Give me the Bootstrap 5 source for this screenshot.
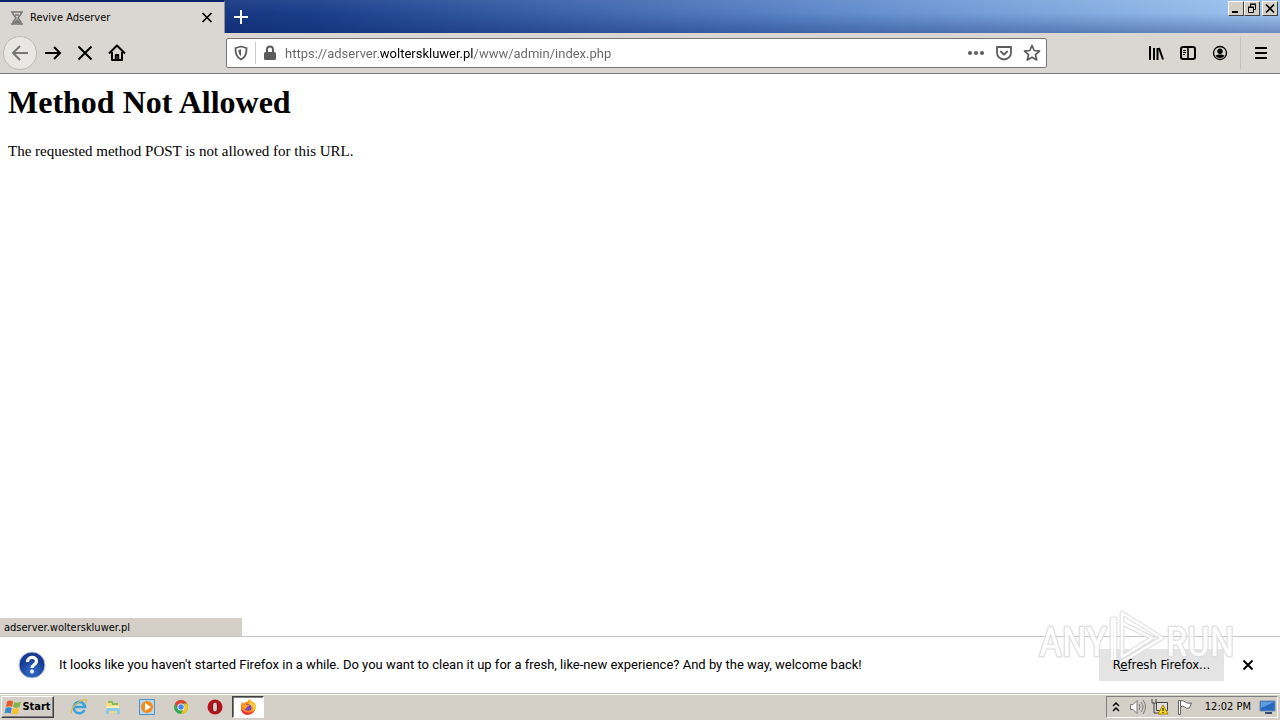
<!DOCTYPE html>
<html lang="en">
<head>
<meta charset="utf-8">
<meta name="viewport" content="width=device-width, initial-scale=1">
<title>Revive Adserver</title>
<link href="https://cdn.jsdelivr.net/npm/bootstrap@5.3.0/dist/css/bootstrap.min.css" rel="stylesheet">
<style>
body{font:11px/14px "DejaVu Sans Condensed","Noto Sans",sans-serif;color:#000;background:#fff}
button{border:0;padding:0;background:none;color:inherit;display:flex;align-items:center;justify-content:center;flex:none}
svg{display:block;flex:none}
.titlebar{height:33px;background:linear-gradient(rgba(255,255,255,.06),rgba(10,30,90,0) 40%,rgba(10,30,100,.34)),linear-gradient(90deg,#0a246a,#1c3f8c 25%,#5f8acb 65%,#a0c5f0)}
.tab{width:225px;background:#dad7d2;border-top:2px solid #0a246a;border-right:1px solid #8f8f8f;padding:0 8px 0 9px}
.tab-label{margin-left:5px}
.newtab{width:32px;color:#fff}
.windows{padding:1px 2px 0 0}
.win{width:16px;height:15px;background:#d4d0c8;border:1px solid;border-color:#fff #404040 #404040 #fff}
.win.last{margin-left:2px}
.toolbar{height:41px;background:#dad7d2;border-bottom:1px solid #777;padding-left:3px}
.navs{width:223px}
.navs button,.tools button{width:32px;height:32px}
.navs .back{width:34px;height:34px;border:1px solid #bcb9b4;border-radius:50%;background:#e9e7e4;color:#777}
.urlbar{height:30px;background:#fff;border:1px solid #777;border-radius:2px;color:#5c5c5c;padding:0 0 0 4px}
.urlbar button{width:28px;height:28px}
.urlbar .shield{width:20px}
.sep{width:1px;height:22px;background:#ccc;margin-left:4px}
.urlbar input{border:0;outline:0;min-width:0;padding:1px 0 0;margin-left:1px;font:13px/18px Roboto,sans-serif;-webkit-text-fill-color:transparent;background:linear-gradient(90deg,#666 0 95px,#000 95px 189px,#666 189px);-webkit-background-clip:text;background-clip:text}
.tools{width:233px}
.tools .menu{width:40px;border-left:1px solid #c4c1bc}
.doc{font-family:"Liberation Serif",serif;padding:10px 8px 0}
.doc h1{font-size:32px;line-height:36px;font-weight:700;margin:0 0 22px}
.doc p{font-size:15px;line-height:18px;margin:0}
.status{width:242px;height:18px;background:#d4d0c8;padding:3px 4px 1px;line-height:14px}
.notice{height:57px;border-top:1px solid #c5c5c5;padding:0 16px 0 18px;font-size:13px;line-height:18px}
.notice-text{margin-left:13px;font-family:Roboto,sans-serif}
.refresh{width:125px;height:32px;background:#e4e4e4}
.closebar{width:32px;height:32px;margin-left:8px}
.taskbar{height:27px;background:#d4d0c8;border-top:1px solid #bbb;box-shadow:inset 0 1px #fff;padding:1px 2px 1px 1px}
.start{width:53px;height:22px;border:1px solid;border-color:#fff #404040 #404040 #fff;box-shadow:inset -1px -1px #808080;font-weight:700;font-size:11px}
.quick{width:34px;height:22px}
.quick.active{width:32px;border:1px solid;border-color:#404040 #fff #fff #404040;background:#fff;box-shadow:inset 1px 1px #808080}
.tray{height:22px;border:1px solid;border-color:#808080 #fff #fff #808080}
.clock{margin-left:12px}
.refresh span{z-index:1}
.watermark{right:46px;bottom:49px;width:196px;height:62px;pointer-events:none}
.watermark text{font:40px "Roboto Condensed",sans-serif;fill:#fff;stroke:#dedede;stroke-width:3px;paint-order:stroke;stroke-linejoin:round}
</style>
</head>
<body class="d-flex flex-column min-vh-100 position-relative">
<header>
<div class="titlebar d-flex">
  <div class="tab d-flex align-items-center">
    <svg width="16" height="16" viewBox="0 0 16 16" fill="none" stroke="#777" stroke-width="1.5"><path d="M2 2h12M2 14h12M4 2v2l3 4-3 4v2M12 2v2L9 8l3 4v2"/><path d="M5.500 12.500 8 10l2.500 2.500zM6 5h4" fill="#999"/></svg>
    <span class="tab-label flex-grow-1">Revive Adserver</span>
    <button aria-label="Close tab"><svg width="18" height="18" viewBox="0 0 18 18" stroke="#000" stroke-width="1.700"><path d="m4.500 4 9 9m0-9-9 9"/></svg></button>
  </div>
  <button class="newtab" aria-label="New tab"><svg width="16" height="16" viewBox="0 0 16 16" stroke="#fff" stroke-width="2"><path d="M8 1v14M1 8h14"/></svg></button>
  <div class="d-flex ms-auto align-items-start windows">
    <button class="win" aria-label="Minimize"><svg width="14" height="13" viewBox="0 0 14 13"><path d="M3 9h6v2H3z"/></svg></button>
    <button class="win" aria-label="Restore"><svg width="14" height="13" viewBox="0 0 14 13" fill="none" stroke="#000"><path d="M5.500 5V2.500h5v5H9M5 2h6M3.500 5.500h5v5h-5zM3 5h6"/></svg></button>
    <button class="win last" aria-label="Close"><svg width="14" height="13" viewBox="0 0 14 13" stroke="#000" stroke-width="1.600"><path d="m3 2.500 8 8m0-8-8 8"/></svg></button>
  </div>
</div>
<nav class="toolbar d-flex align-items-center" aria-label="Browser toolbar">
  <div class="navs d-flex align-items-center">
    <button class="back" aria-label="Back"><svg width="18" height="18" viewBox="0 0 18 18" fill="none" stroke="currentColor" stroke-width="2"><path d="M17 9H2m7-7L2 9l7 7"/></svg></button>
    <button aria-label="Forward"><svg width="18" height="18" viewBox="0 0 18 18" fill="none" stroke="#000" stroke-width="2"><path d="M1 9h15M10 3l6 6-6 6"/></svg></button>
    <button aria-label="Stop"><svg width="16" height="16" viewBox="0 0 16 16" stroke="#000" stroke-width="2"><path d="m1.500 1.500 13 13m0-13-13 13"/></svg></button>
    <button aria-label="Home"><svg width="18" height="18" viewBox="0 0 18 18" fill="none" stroke="#000" stroke-width="2" stroke-linejoin="round"><path d="m1 9.500 8-8 8 8M4 8v8h10V8M7.800 16v-5h2.400v5"/></svg></button>
  </div>
  <div class="urlbar d-flex align-items-center flex-grow-1">
    <button class="shield" aria-label="Tracking protection"><svg width="16" height="16" viewBox="0 0 16 16" fill="none" stroke="currentColor" stroke-width="1.800"><path d="M8 1.500 13.500 3c0 5-.5 9-5.500 11.500C3 12 2.500 8 2.500 3z" stroke-linejoin="round"/><path d="M8 4.300v7C6 9.500 5.500 8 5.400 5z" fill="currentColor" stroke="none"/></svg></button>
    <span class="sep"></span>
    <button aria-label="Site information"><svg width="14" height="16" viewBox="0 0 14 16"><path d="M4 7V4.500a3 3 0 0 1 6 0V7" fill="none" stroke="currentColor" stroke-width="2"/><rect x="1" y="7" width="12" height="8" rx="1.500" fill="currentColor"/></svg></button>
    <input class="flex-grow-1" type="text" aria-label="Address" value="https://adserver.wolterskluwer.pl/www/admin/index.php" spellcheck="false">
    <button aria-label="Page actions"><svg width="18" height="6" viewBox="0 0 18 6" fill="currentColor"><circle cx="3" cy="3" r="2"/><circle cx="9" cy="3" r="2"/><circle cx="15" cy="3" r="2"/></svg></button>
    <button aria-label="Save to Pocket"><svg width="16" height="16" viewBox="0 0 16 16" fill="none" stroke="currentColor" stroke-width="1.800" stroke-linejoin="round" stroke-linecap="round"><path d="M1 2h14v5.500a7 7 0 0 1-14 0zM4.800 6.500 8 9.500l3.200-3"/></svg></button>
    <button aria-label="Bookmark"><svg width="18" height="18" viewBox="0 0 18 18" fill="none" stroke="currentColor" stroke-width="1.700" stroke-linejoin="round"><path d="m9 1.500 2.200 5 5.300.6-4 3.600 1.200 5.300L9 13.300 4.300 16l1.200-5.300-4-3.600 5.300-.6z"/></svg></button>
  </div>
  <div class="tools d-flex justify-content-end align-items-center">
    <button aria-label="Library"><svg width="16" height="16" viewBox="0 0 16 16" stroke="#000" stroke-width="2"><path d="M2 1v14M6 3v12M9.500 3v12M11 3l4 11.500"/></svg></button>
    <button aria-label="Sidebars"><svg width="16" height="16" viewBox="0 0 16 16" fill="none" stroke="#000"><rect x="1" y="2" width="14" height="12" rx="2" stroke-width="2"/><path d="M8 2v12" stroke-width="1.600"/><path d="M3 5.500h3M3 7.500h3M3 9.500h2"/></svg></button>
    <button aria-label="Account"><svg width="16" height="16" viewBox="0 0 16 16"><circle cx="8" cy="8" r="6.500" fill="none" stroke="#000" stroke-width="1.300"/><circle cx="8" cy="6.200" r="2.700"/><path d="M3.500 11c.5-2 8.500-2 9 0a6 6 0 0 1-9 0"/></svg></button>
    <button class="menu ms-1" aria-label="Menu"><svg width="14" height="14" viewBox="0 0 14 14" stroke="#000" stroke-width="2"><path d="M1 2h12M1 7h12M1 12h12"/></svg></button>
  </div>
</nav>
</header>
<main class="doc flex-grow-1">
  <h1>Method Not Allowed</h1>
  <p>The requested method POST is not allowed for this URL.</p>
</main>
<div class="status">adserver.wolterskluwer.pl</div>
<section class="notice d-flex align-items-center" aria-label="Notification">
  <svg width="28" height="28" viewBox="0 0 28 28"><defs><radialGradient id="q" cy=".75"><stop stop-color="#3470d0"/><stop offset="1" stop-color="#183c92"/></radialGradient></defs><circle cx="14" cy="14" r="13" fill="url(#q)" stroke="#b8c4dc"/><path d="M9.500 11c0-6 9-6 9-1 0 4-4.500 3.500-4.500 7" fill="none" stroke="#fff" stroke-width="3.200"/><circle cx="14" cy="20.500" r="2" fill="#fff"/></svg>
  <span class="flex-grow-1 notice-text">It looks like you haven't started Firefox in a while. Do you want to clean it up for a fresh, like-new experience? And by the way, welcome back!</span>
  <button class="refresh"><span class="position-relative">R<u>e</u>fresh Firefox...</span></button>
  <button class="closebar" aria-label="Dismiss"><svg width="14" height="14" viewBox="0 0 14 14" stroke="#000" stroke-width="2"><path d="m2.500 2.500 9 9m0-9-9 9"/></svg></button>
</section>
<footer class="taskbar d-flex align-items-center">
  <button class="start"><svg width="18" height="17" viewBox="0 0 18 17"><path d="M3 2.500c2-1.500 4-1.500 6 0L8 8C6 7 4 7 2 8z" fill="#e8582c"/><path d="M10 3c2 1 4 1 7-.500L15.500 8c-2 1-4.500 1-6.500 0z" fill="#7eb544"/><path d="M1.700 9c2-1 4-1 6 0l-1 5.500c-2-1-4-1-6 0z" fill="#3c85cc"/><path d="M8.700 9c2 1 4.500 1 6.500 0L14 14.500c-2 1-4 1-6.300 0z" fill="#f6c030"/></svg>Start</button>
  <div class="d-flex ms-2">
    <button class="quick" aria-label="Internet Explorer"><svg width="18" height="18" viewBox="0 0 18 18" fill="none"><path d="M14.500 12A5.700 5.700 0 1 1 15 9H5" stroke="#38a3df" stroke-width="2.600"/><path d="M2 15.500C-1 13 6 4 13 2c4-1 4 1 3 3" stroke="#e5b93c" stroke-width="1.300"/></svg></button>
    <button class="quick" aria-label="File Explorer"><svg width="18" height="18" viewBox="0 0 18 18"><path d="M2 3h5l1 2h7v10H2z" fill="#f0d987"/><path d="M4 4h5M8 6h6" stroke="#6ab04c" stroke-width="1.500"/><path d="M3 8h12v3H3z" fill="#fff0b3"/><path d="M2 16v-4q0-2 2-2h10q2 0 2 2v4h-3v-3H5v3z" fill="#8bc8e9"/></svg></button>
    <button class="quick" aria-label="Media Player"><svg width="18" height="18" viewBox="0 0 18 18"><path d="M1.500 1.500h15v15h-15z" fill="#b8d8f0" stroke="#4c93ca"/><circle cx="9" cy="9" r="6" fill="#f58a16"/><path d="m7 5 6 4-6 4z" fill="#fff"/></svg></button>
    <button class="quick" aria-label="Chrome"><svg width="16" height="16" viewBox="0 0 16 16"><circle cx="8" cy="8" r="7" fill="#36a852"/><path d="M2 4.400A7 7 0 0 1 14 4.500H8L5 9.500z" fill="#e34133"/><path d="M14 4.500A7 7 0 0 1 8 15l3.300-6V4.500z" fill="#fbc116"/><circle cx="8" cy="8" r="3.600" fill="#fff"/><circle cx="8" cy="8" r="2.700" fill="#4285f4"/></svg></button>
    <button class="quick" aria-label="Opera"><svg width="18" height="18" viewBox="0 0 18 18"><circle cx="9" cy="9" r="7.500" fill="#b5131c"/><ellipse cx="9" cy="9" rx="2.500" ry="5" fill="#d4d0c8" stroke="#7b0910"/></svg></button>
    <button class="quick active" aria-label="Firefox"><svg width="18" height="18" viewBox="0 0 18 18"><path d="M3 4l1.500 1.500C6 4 7 4 8 4l3-3c0 2 2 2 3 4l1-1c4 6 0 13-6 13S0 10 3 4" fill="#ff8718"/><path d="M11 1c0 2 2 2 3 4l1-1c3 5 1 9-2 11 2-6-1-8-4-8z" fill="#ffc52f"/><path d="M2 11c1 8 12 7 14 0-3 5-8 5-14 0" fill="#ed2c48"/><circle cx="9" cy="9.500" r="3.300" fill="#7544c7"/><path d="M4 7c3-1 4 1 7 0-1 2-4 1-4 4-2 0-3-2-3-4" fill="#ffa51c"/></svg></button>
  </div>
  <div class="tray d-flex align-items-center ms-auto ps-1">
    <svg width="10" height="12" viewBox="0 0 10 12" fill="none" stroke="#000" stroke-width="1.500"><path d="m2 5 3-3 3 3M2 10l3-3 3 3"/></svg>
    <svg class="ms-2" width="18" height="18" viewBox="0 0 18 18" fill="#fff" stroke="#777"><path d="M1.500 6.500H4l4-4v13l-4-4H1.500z"/><path d="M10 6q2 3 0 6m2-8q4 5 0 10m2-12q5 7 0 14" fill="none"/></svg>
    <svg class="ms-1" width="18" height="18" viewBox="0 0 18 18"><path d="M5.500 4.500h11v8h-11z" fill="#ddd" stroke="#444"/><path d="M1 1v4h4V1M3 5v10h5" fill="none" stroke="#444"/><path d="m12 7 5 9H7z" fill="#ffdc24" stroke="#a58500"/><path d="M12 10v3m0 1v1" stroke="#000"/></svg>
    <svg class="ms-2" width="16" height="18" viewBox="0 0 16 18" fill="#fff" stroke="#666"><path d="M1.500 2.500h2v14h-2zM3.500 3q3-1 5 1t6 1l-2 5q-3 1-5-1t-4 0z"/></svg>
    <span class="clock">12:02 PM</span>
    <svg class="ms-2" width="18" height="18" viewBox="0 0 18 18"><path d="M1 3h15v10H1z" fill="#2967bd" stroke="#6c8db8"/><path d="M2 4h13L2 10z" fill="#5c9ee2"/><path d="M6 14h7v2H6z" fill="#344b70"/></svg>
  </div>
</footer>
<svg class="watermark position-absolute" viewBox="0 0 196 62" aria-hidden="true" opacity=".85"><text x="1" y="47">ANY</text><g fill="none" stroke-linejoin="round"><path d="M84 48V4l40 25-47 28V10h-3v41M84 14v34l30-19z" stroke="#dedede" stroke-width="5"/><path d="M84 48V4l40 25-47 28V10h-3v41M84 14v34l30-19z" stroke="#fff" stroke-width="2.500"/></g><text x="128" y="47">RUN</text></svg>
<script src="https://cdn.jsdelivr.net/npm/bootstrap@5.3.0/dist/js/bootstrap.bundle.min.js"></script>
</body>
</html>
